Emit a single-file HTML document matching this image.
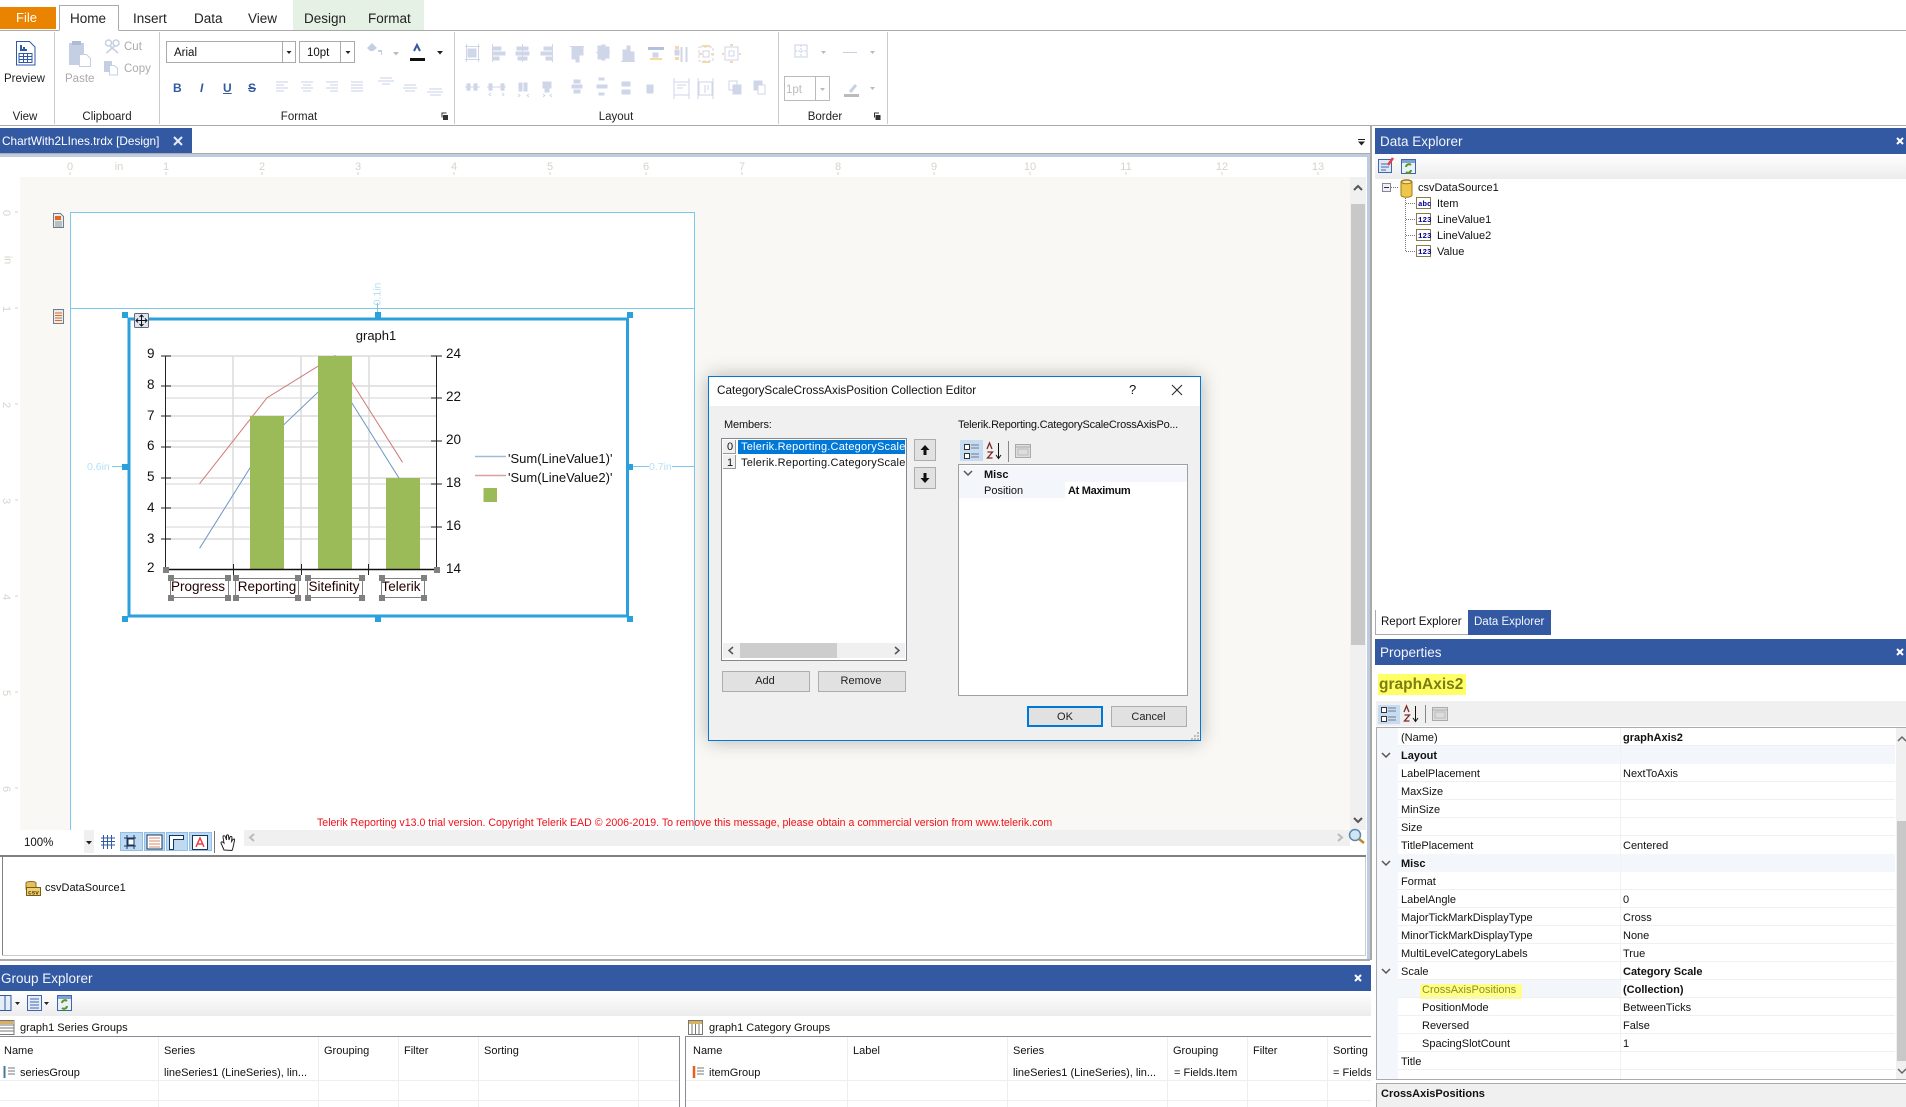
<!DOCTYPE html>
<html><head><meta charset="utf-8"><title>Telerik Report Designer</title>
<style>
html,body{margin:0;padding:0;background:#fff}
#p{position:relative;width:1906px;height:1107px;overflow:hidden;background:#fff;font:11px "Liberation Sans",sans-serif;color:#111}
#p div{position:absolute}
.t{position:absolute;white-space:nowrap;line-height:14px;margin-top:1px}
.t.n{margin-top:0}
.c{transform:translateX(-50%)}
.tab{font-size:13.5px;color:#222}
.g{font-size:11.5px;color:#222}
.h{background:#3359A3;color:#f2f5fa;font-size:13.5px}
.r{color:#d8d3cb;font-size:11px}
.b{font-weight:bold}
.gr{color:#111}
.btn{background:#e1e1e1;border:1px solid #adadad;box-sizing:border-box;text-align:center;line-height:19px;color:#222}
</style></head><body><div id="p">

<!-- ribbon -->
<div style="left:0;top:7px;width:56px;height:22px;background:#E98300"></div>
<div style="left:293px;top:0;width:131px;height:31px;background:#E6F1E6"></div>
<div style="left:0;top:30px;width:1906px;height:1px;background:#aaa"></div>
<div style="left:59px;top:5px;width:60px;height:26px;box-sizing:border-box;border:1px solid #aaa;border-bottom:1px solid #fff;background:#fff"></div>
<span class="t tab" style="left:16px;top:10px;color:#fff;font-size:13px">File</span>
<span class="t tab n" style="left:70px;top:12px">Home</span>
<span class="t tab n" style="left:133px;top:12px">Insert</span>
<span class="t tab n" style="left:194px;top:12px">Data</span>
<span class="t tab n" style="left:248px;top:12px">View</span>
<span class="t tab n" style="left:304px;top:12px">Design</span>
<span class="t tab n" style="left:368px;top:12px">Format</span>
<div style="left:54px;top:32px;width:1px;height:92px;background:#ccc"></div>
<div style="left:159px;top:32px;width:1px;height:92px;background:#ccc"></div>
<div style="left:454px;top:32px;width:1px;height:92px;background:#ccc"></div>
<div style="left:778px;top:32px;width:1px;height:92px;background:#ccc"></div>
<div style="left:887px;top:32px;width:1px;height:92px;background:#ccc"></div>
<div style="left:0;top:125px;width:1906px;height:1px;background:#aaa"></div>
<span class="t g" style="left:4px;top:71px">Preview</span>
<span class="t g" style="left:65px;top:71px;color:#aaa">Paste</span>
<span class="t g" style="left:124px;top:39px;color:#aaa">Cut</span>
<span class="t g" style="left:124px;top:61px;color:#aaa">Copy</span>
<span class="t g c" style="left:25px;top:109px">View</span>
<span class="t g c" style="left:107px;top:109px">Clipboard</span>
<span class="t g c" style="left:299px;top:109px">Format</span>
<span class="t g c" style="left:616px;top:109px">Layout</span>
<span class="t g c" style="left:825px;top:109px">Border</span>
<div style="left:166px;top:41px;width:130px;height:22px;box-sizing:border-box;border:1px solid #aaa"></div>
<div style="left:282px;top:41px;width:1px;height:22px;background:#aaa"></div>
<span class="t" style="left:174px;top:45px;font-size:11.5px">Arial</span>
<div style="left:299px;top:41px;width:56px;height:22px;box-sizing:border-box;border:1px solid #aaa"></div>
<div style="left:340px;top:41px;width:1px;height:22px;background:#aaa"></div>
<span class="t" style="left:307px;top:45px;font-size:11.5px">10pt</span>
<span class="t b" style="left:173px;top:80px;color:#3359A3;font-size:12px">B</span>
<span class="t" style="left:200px;top:80px;color:#3359A3;font-size:12px;font-style:italic;font-weight:bold">I</span>
<span class="t" style="left:223px;top:80px;color:#3359A3;font-size:12px;text-decoration:underline;font-weight:bold">U</span>
<span class="t" style="left:248px;top:80px;color:#3359A3;font-size:12px;text-decoration:line-through;font-weight:bold">S</span>
<div style="left:784px;top:76px;width:46px;height:25px;box-sizing:border-box;border:1px solid #bbb"></div>
<div style="left:815px;top:76px;width:1px;height:25px;background:#bbb"></div>
<span class="t" style="left:786px;top:82px;font-size:11.5px;color:#bbb">1pt</span>

<!-- document tab -->
<div style="left:0;top:128px;width:192px;height:25px;background:#3359A3"></div>
<span class="t" style="left:2px;top:133px;color:#fff;font-size:11.8px">ChartWith2LInes.trdx [Design]</span>
<div style="left:0;top:153px;width:1370px;height:1px;background:#aaa"></div>
<div style="left:0;top:154px;width:1370px;height:3px;background:#BFCBE0"></div>
<div style="left:1367px;top:154px;width:3px;height:806px;background:#BFCBE0"></div>
<div style="left:1370px;top:126px;width:2px;height:834px;background:#a8a8a8"></div>

<!-- ruler -->
<span class="t r c" style="left:70px;top:159px">0</span>
<span class="t r c" style="left:119px;top:159px">in</span>
<span class="t r c" style="left:166px;top:159px">1</span>
<span class="t r c" style="left:262px;top:159px">2</span>
<span class="t r c" style="left:358px;top:159px">3</span>
<span class="t r c" style="left:454px;top:159px">4</span>
<span class="t r c" style="left:550px;top:159px">5</span>
<span class="t r c" style="left:646px;top:159px">6</span>
<span class="t r c" style="left:742px;top:159px">7</span>
<span class="t r c" style="left:838px;top:159px">8</span>
<span class="t r c" style="left:934px;top:159px">9</span>
<span class="t r c" style="left:1030px;top:159px">10</span>
<span class="t r c" style="left:1126px;top:159px">11</span>
<span class="t r c" style="left:1222px;top:159px">12</span>
<span class="t r c" style="left:1318px;top:159px">13</span>
<span class="t r" style="left:3px;top:205px;transform:rotate(90deg)">0</span>
<span class="t r" style="left:3px;top:252px;transform:rotate(90deg)">in</span>
<span class="t r" style="left:3px;top:301px;transform:rotate(90deg)">1</span>
<span class="t r" style="left:3px;top:397px;transform:rotate(90deg)">2</span>
<span class="t r" style="left:3px;top:493px;transform:rotate(90deg)">3</span>
<span class="t r" style="left:3px;top:589px;transform:rotate(90deg)">4</span>
<span class="t r" style="left:3px;top:685px;transform:rotate(90deg)">5</span>
<span class="t r" style="left:3px;top:781px;transform:rotate(90deg)">6</span>

<!-- canvas -->
<div style="left:20px;top:177px;width:1330px;height:653px;background:#F9F8F4"></div>
<div style="left:70px;top:212px;width:625px;height:618px;box-sizing:border-box;background:#fff;border:1px solid #7CC8EA;border-bottom:0"></div>
<div style="left:70px;top:308px;width:625px;height:1px;background:#7CC8EA"></div>
<span class="t" style="left:317px;top:815px;color:#f0101a;font-size:10.6px">Telerik Reporting v13.0 trial version. Copyright Telerik EAD © 2006-2019. To remove this message, please obtain a commercial version from www.telerik.com</span>
<div style="left:1350px;top:177px;width:16px;height:653px;background:#f0f0f0"></div>
<div style="left:1351px;top:204px;width:14px;height:441px;background:#c8c8c8"></div>

<!-- bottom toolbar -->
<div style="left:0;top:830px;width:1366px;height:23px;background:#fff"></div>
<div style="left:84px;top:830px;width:10px;height:23px;background:#f0f0f0"></div>
<div style="left:244px;top:830px;width:1106px;height:16px;background:#f0f0f0"></div>
<span class="t" style="left:24px;top:835px;font-size:11.5px">100%</span>
<div style="left:120px;top:832px;width:92px;height:19px;background:#BFD9F1"></div>
<div style="left:0;top:855px;width:1366px;height:2px;background:#808080"></div>
<div style="left:2px;top:857px;width:1px;height:98px;background:#808080"></div>
<div style="left:1365px;top:857px;width:1px;height:98px;background:#ccc"></div>
<div style="left:2px;top:955px;width:1364px;height:1px;background:#ccc"></div>
<span class="t" style="left:45px;top:880px">csvDataSource1</span>
<div style="left:0;top:959px;width:1370px;height:2px;background:#aaa"></div>

<!-- group explorer -->
<div class="h" style="left:0;top:965px;width:1371px;height:26px"></div>
<span class="t" style="left:1px;top:971px;color:#f2f5fa;font-size:13.5px">Group Explorer</span>
<div style="left:0;top:991px;width:1371px;height:25px;background:linear-gradient(#fff,#ececec)"></div>
<span class="t" style="left:20px;top:1020px">graph1 Series Groups</span>
<span class="t" style="left:709px;top:1020px">graph1 Category Groups</span>
<div style="left:-2px;top:1036px;width:682px;height:80px;box-sizing:border-box;border:1px solid #8b8b96"></div>
<div style="left:685px;top:1036px;width:686px;height:80px;box-sizing:border-box;border:1px solid #8b8b96;border-right:0"></div>
<div style="left:0;top:1080px;width:679px;height:1px;background:#eee"></div>
<div style="left:0;top:1100px;width:679px;height:1px;background:#eee"></div>
<div style="left:686px;top:1080px;width:685px;height:1px;background:#eee"></div>
<div style="left:686px;top:1100px;width:685px;height:1px;background:#eee"></div>
<div style="left:158px;top:1037px;width:1px;height:70px;background:#eee"></div>
<div style="left:318px;top:1037px;width:1px;height:70px;background:#eee"></div>
<div style="left:398px;top:1037px;width:1px;height:70px;background:#eee"></div>
<div style="left:478px;top:1037px;width:1px;height:70px;background:#eee"></div>
<div style="left:638px;top:1037px;width:1px;height:70px;background:#eee"></div>
<div style="left:847px;top:1037px;width:1px;height:70px;background:#eee"></div>
<div style="left:1007px;top:1037px;width:1px;height:70px;background:#eee"></div>
<div style="left:1167px;top:1037px;width:1px;height:70px;background:#eee"></div>
<div style="left:1247px;top:1037px;width:1px;height:70px;background:#eee"></div>
<div style="left:1327px;top:1037px;width:1px;height:70px;background:#eee"></div>
<span class="t" style="left:4px;top:1043px">Name</span>
<span class="t" style="left:164px;top:1043px">Series</span>
<span class="t" style="left:324px;top:1043px">Grouping</span>
<span class="t" style="left:404px;top:1043px">Filter</span>
<span class="t" style="left:484px;top:1043px">Sorting</span>
<span class="t" style="left:20px;top:1065px">seriesGroup</span>
<span class="t" style="left:164px;top:1065px">lineSeries1 (LineSeries), lin...</span>
<span class="t" style="left:693px;top:1043px">Name</span>
<span class="t" style="left:853px;top:1043px">Label</span>
<span class="t" style="left:1013px;top:1043px">Series</span>
<span class="t" style="left:1173px;top:1043px">Grouping</span>
<span class="t" style="left:1253px;top:1043px">Filter</span>
<span class="t" style="left:1333px;top:1043px;width:38px;overflow:hidden">Sorting</span>
<span class="t" style="left:709px;top:1065px">itemGroup</span>
<span class="t" style="left:1013px;top:1065px">lineSeries1 (LineSeries), lin...</span>
<span class="t" style="left:1174px;top:1065px">= Fields.Item</span>
<span class="t" style="left:1333px;top:1065px;width:38px;overflow:hidden">= Fields.Item</span>

<!-- data explorer -->
<div class="h" style="left:1375px;top:128px;width:531px;height:26px"></div>
<span class="t" style="left:1380px;top:134px;color:#f2f5fa;font-size:13.5px">Data Explorer</span>
<div style="left:1375px;top:154px;width:531px;height:25px;background:linear-gradient(#fff,#ececec)"></div>
<span class="t" style="left:1418px;top:180px">csvDataSource1</span>
<span class="t" style="left:1437px;top:196px">Item</span>
<span class="t" style="left:1437px;top:212px">LineValue1</span>
<span class="t" style="left:1437px;top:228px">LineValue2</span>
<span class="t" style="left:1437px;top:244px">Value</span>
<div style="left:1375px;top:610px;width:93px;height:25px;box-sizing:border-box;border-left:1px solid #aaa;border-bottom:1px solid #aaa"></div>
<div style="left:1468px;top:610px;width:83px;height:25px;background:#3359A3"></div>
<span class="t" style="left:1381px;top:614px;font-size:11.5px">Report Explorer</span>
<span class="t" style="left:1474px;top:614px;color:#f2f5fa;font-size:11.5px">Data Explorer</span>

<!-- properties -->
<div class="h" style="left:1375px;top:639px;width:531px;height:26px"></div>
<span class="t" style="left:1380px;top:645px;color:#f2f5fa;font-size:13.5px">Properties</span>
<div style="left:1378px;top:674px;width:88px;height:21px;background:#FFFF66"></div>
<span class="t b" style="left:1379px;top:677px;font-size:15.5px;color:#7d7d12">graphAxis2</span>
<div style="left:1376px;top:701px;width:530px;height:25px;background:#f0f0f0"></div>
<div style="left:1378px;top:705px;width:22px;height:19px;background:#C5DCF3"></div>
<div style="left:1376px;top:727px;width:530px;height:1px;background:#aaa"></div>
<div style="left:1376px;top:728px;width:1px;height:351px;background:#aaa"></div>
<div style="left:1376px;top:1079px;width:530px;height:1px;background:#aaa"></div>
<div style="left:1377px;top:728px;width:21px;height:351px;background:#F3F6FB"></div>
<div style="left:1398px;top:746px;width:497px;height:18px;background:#F3F6FB"></div>
<div style="left:1377px;top:854px;width:518px;height:18px;background:#F3F6FB"></div>
<div style="left:1398px;top:980px;width:222px;height:18px;background:#F3F6FB"></div>
<div style="left:1420px;top:984px;width:102px;height:15px;background:#FFFF88"></div>
<div style="left:1620px;top:728px;width:1px;height:351px;background:#f2f2f2"></div>
<div style="left:1398px;top:745px;width:497px;height:1px;background:#f0f0f0"></div>
<div style="left:1398px;top:781px;width:497px;height:1px;background:#f0f0f0"></div>
<div style="left:1398px;top:799px;width:497px;height:1px;background:#f0f0f0"></div>
<div style="left:1398px;top:817px;width:497px;height:1px;background:#f0f0f0"></div>
<div style="left:1398px;top:835px;width:497px;height:1px;background:#f0f0f0"></div>
<div style="left:1398px;top:889px;width:497px;height:1px;background:#f0f0f0"></div>
<div style="left:1398px;top:907px;width:497px;height:1px;background:#f0f0f0"></div>
<div style="left:1398px;top:925px;width:497px;height:1px;background:#f0f0f0"></div>
<div style="left:1398px;top:943px;width:497px;height:1px;background:#f0f0f0"></div>
<div style="left:1398px;top:961px;width:497px;height:1px;background:#f0f0f0"></div>
<div style="left:1398px;top:979px;width:497px;height:1px;background:#f0f0f0"></div>
<div style="left:1398px;top:997px;width:497px;height:1px;background:#f0f0f0"></div>
<div style="left:1398px;top:1015px;width:497px;height:1px;background:#f0f0f0"></div>
<div style="left:1398px;top:1033px;width:497px;height:1px;background:#f0f0f0"></div>
<div style="left:1398px;top:1051px;width:497px;height:1px;background:#f0f0f0"></div>
<div style="left:1398px;top:1069px;width:497px;height:1px;background:#f0f0f0"></div>
<div style="left:1896px;top:728px;width:10px;height:351px;background:#f0f0f0"></div>
<div style="left:1897px;top:821px;width:9px;height:240px;background:#c8c8c8"></div>
<span class="t" style="left:1401px;top:730px">(Name)</span><span class="t b" style="left:1623px;top:730px">graphAxis2</span>
<span class="t b" style="left:1401px;top:748px">Layout</span>
<span class="t" style="left:1401px;top:766px">LabelPlacement</span><span class="t" style="left:1623px;top:766px">NextToAxis</span>
<span class="t" style="left:1401px;top:784px">MaxSize</span>
<span class="t" style="left:1401px;top:802px">MinSize</span>
<span class="t" style="left:1401px;top:820px">Size</span>
<span class="t" style="left:1401px;top:838px">TitlePlacement</span><span class="t" style="left:1623px;top:838px">Centered</span>
<span class="t b" style="left:1401px;top:856px">Misc</span>
<span class="t" style="left:1401px;top:874px">Format</span>
<span class="t" style="left:1401px;top:892px">LabelAngle</span><span class="t" style="left:1623px;top:892px">0</span>
<span class="t" style="left:1401px;top:910px">MajorTickMarkDisplayType</span><span class="t" style="left:1623px;top:910px">Cross</span>
<span class="t" style="left:1401px;top:928px">MinorTickMarkDisplayType</span><span class="t" style="left:1623px;top:928px">None</span>
<span class="t" style="left:1401px;top:946px">MultiLevelCategoryLabels</span><span class="t" style="left:1623px;top:946px">True</span>
<span class="t" style="left:1401px;top:964px">Scale</span><span class="t b" style="left:1623px;top:964px">Category Scale</span>
<span class="t" style="left:1422px;top:982px;color:#8f8f1c">CrossAxisPositions</span><span class="t b" style="left:1623px;top:982px">(Collection)</span>
<span class="t" style="left:1422px;top:1000px">PositionMode</span><span class="t" style="left:1623px;top:1000px">BetweenTicks</span>
<span class="t" style="left:1422px;top:1018px">Reversed</span><span class="t" style="left:1623px;top:1018px">False</span>
<span class="t" style="left:1422px;top:1036px">SpacingSlotCount</span><span class="t" style="left:1623px;top:1036px">1</span>
<span class="t" style="left:1401px;top:1054px">Title</span>
<div style="left:1376px;top:1083px;width:530px;height:24px;box-sizing:border-box;background:#f0f0f0;border-top:1px solid #aaa;border-left:1px solid #aaa"></div>
<span class="t b" style="left:1381px;top:1086px">CrossAxisPositions</span>

<!-- chart labels -->
<span class="t c n" style="left:376px;top:329px;font-size:13px">graph1</span>
<span class="t n" style="left:147px;top:347px;font-size:13.5px">9</span>
<span class="t n" style="left:147px;top:378px;font-size:13.5px">8</span>
<span class="t n" style="left:147px;top:409px;font-size:13.5px">7</span>
<span class="t n" style="left:147px;top:439px;font-size:13.5px">6</span>
<span class="t n" style="left:147px;top:470px;font-size:13.5px">5</span>
<span class="t n" style="left:147px;top:501px;font-size:13.5px">4</span>
<span class="t n" style="left:147px;top:532px;font-size:13.5px">3</span>
<span class="t n" style="left:147px;top:561px;font-size:13.5px">2</span>
<span class="t n" style="left:446px;top:347px;font-size:13.5px">24</span>
<span class="t n" style="left:446px;top:390px;font-size:13.5px">22</span>
<span class="t n" style="left:446px;top:433px;font-size:13.5px">20</span>
<span class="t n" style="left:446px;top:476px;font-size:13.5px">18</span>
<span class="t n" style="left:446px;top:519px;font-size:13.5px">16</span>
<span class="t n" style="left:446px;top:562px;font-size:13.5px">14</span>
<span class="t" style="left:508px;top:451px;font-size:13px">'Sum(LineValue1)'</span>
<span class="t" style="left:508px;top:470px;font-size:13px">'Sum(LineValue2)'</span>
<span class="t c" style="left:198px;top:579px;font-size:13.5px;color:#200">Progress</span>
<span class="t c" style="left:267px;top:579px;font-size:13.5px;color:#200">Reporting</span>
<span class="t c" style="left:334px;top:579px;font-size:13.5px;color:#200">Sitefinity</span>
<span class="t c" style="left:401px;top:579px;font-size:13.5px;color:#200">Telerik</span>
<span class="t" style="left:366px;top:286px;font-size:10.5px;color:#b5e0f4;transform:rotate(-90deg)">0.1in</span>
<span class="t" style="left:87px;top:459px;font-size:10.5px;color:#b5e0f4">0.6in</span>
<span class="t" style="left:649px;top:459px;font-size:10.5px;color:#b5e0f4">0.7in</span>

<!-- dialog -->
<div style="left:708px;top:376px;width:493px;height:365px;box-sizing:border-box;background:#f0f0f0;border:1px solid #0078D7;box-shadow:0 0 18px rgba(0,0,0,.28)"></div>
<div style="left:709px;top:377px;width:491px;height:29px;background:#fff"></div>
<span class="t n" style="left:717px;top:384px;font-size:11.7px">CategoryScaleCrossAxisPosition Collection Editor</span>
<span class="t n" style="left:1129px;top:383px;font-size:13px">?</span>
<span class="t n" style="left:724px;top:418px;letter-spacing:-.15px">Members:</span>
<span class="t" style="left:958px;top:417px;letter-spacing:-.22px">Telerik.Reporting.CategoryScaleCrossAxisPo...</span>
<div style="left:721px;top:438px;width:186px;height:223px;box-sizing:border-box;background:#fff;border:1px solid #828790"></div>
<div style="left:723px;top:440px;width:13px;height:14px;background:#f0f0f0;border-right:1px solid #999;border-bottom:1px solid #999;box-sizing:border-box"></div>
<div style="left:723px;top:455px;width:13px;height:14px;background:#f0f0f0;border-right:1px solid #999;border-bottom:1px solid #999;box-sizing:border-box"></div>
<span class="t n" style="left:727px;top:440px">0</span>
<span class="t" style="left:727px;top:455px">1</span>
<div style="left:738px;top:440px;width:167px;height:14px;background:#0078D7"></div>
<div style="left:741px;top:440px;width:164px;height:14px;overflow:hidden;color:#fff;line-height:14px;white-space:nowrap;letter-spacing:.22px">Telerik.Reporting.CategoryScaleCrossAxisPosition</div>
<div style="left:741px;top:456px;width:164px;height:14px;overflow:hidden;line-height:14px;white-space:nowrap;letter-spacing:.22px">Telerik.Reporting.CategoryScaleCrossAxisPosition</div>
<div style="left:723px;top:643px;width:182px;height:15px;background:#f0f0f0"></div>
<div style="left:740px;top:643px;width:97px;height:15px;background:#CDCDCD"></div>
<div class="btn" style="left:914px;top:439px;width:22px;height:22px"></div>
<div class="btn" style="left:914px;top:467px;width:22px;height:22px"></div>
<div class="btn" style="left:722px;top:671px;width:88px;height:21px;padding-right:2px">Add</div>
<div class="btn" style="left:818px;top:671px;width:88px;height:21px;padding-right:2px">Remove</div>
<div style="left:960px;top:440px;width:23px;height:21px;background:#C5DCF3"></div>
<div style="left:958px;top:464px;width:230px;height:232px;box-sizing:border-box;background:#fff;border:1px solid #a0a0a0"></div>
<div style="left:959px;top:466px;width:228px;height:16px;background:#F3F6FB"></div>
<div style="left:959px;top:482px;width:106px;height:16px;background:#F3F6FB"></div>
<span class="t b" style="left:984px;top:467px">Misc</span>
<span class="t" style="left:984px;top:483px">Position</span>
<span class="t b" style="left:1068px;top:483px;letter-spacing:-.3px">At Maximum</span>
<div class="btn" style="left:1027px;top:706px;width:76px;height:21px;border:2px solid #0078D7;line-height:18px">OK</div>
<div class="btn" style="left:1111px;top:706px;width:76px;height:21px;line-height:21px;padding-right:1px">Cancel</div>

<!-- graphics overlay -->
<svg style="position:absolute;left:0;top:0" width="1906" height="1107" viewBox="0 0 1906 1107" fill="none">
<!-- Preview icon -->
<path d="M16.5 41.5h13l5.5 5.5v18h-18.5z" fill="#fff" stroke="#2f5aa8"/>
<path d="M20 45v6h7v-2h-2v-2h-2v2h-1v-4z" fill="#2f5aa8"/>
<path d="M19 53.5h13v9h-13zM19 56.5h13M19 59.5h13M23.5 53.5v9M27.5 53.5v9" stroke="#2f5aa8"/>
<!-- Paste -->
<rect x="69" y="43" width="15" height="22" fill="#c5cfe3"/><rect x="72" y="41" width="9" height="4" fill="#aebbd6"/>
<path d="M79.500 54.500h7l4 4v8h-11z" fill="#fff" stroke="#c5cfe3"/>
<!-- Cut/copy -->
<g stroke="#c5cfe3" stroke-width="1.500"><circle cx="108.500" cy="43" r="3"/><circle cx="116" cy="43" r="3"/><path d="M110 46l8 7M114.500 46l-8 7"/></g>
<rect x="104" y="61" width="8" height="11" fill="#c5cfe3"/><path d="M109.500 65.500h5l3 3v6.500h-8z" fill="#fff" stroke="#c5cfe3"/>
<!-- combos arrows -->
<path d="M286.500 51h5l-2.500 3zM345.500 51h5l-2.500 3zM437 51h6l-3 3.500z" fill="#222"/>
<!-- highlight + color -->
<path d="M367 60l5-5 5 5-4 3h-3z" transform="translate(0,-12)" fill="#c5cfe3"/><path d="M378 50h4v5h-1v-3h-3z" fill="#c5cfe3"/>
<path d="M393 52h6l-3 3.500z" fill="#bbb"/>
<path d="M417 50l0 0M414 51l3-6 3 6" stroke="#3359A3" stroke-width="2"/><rect x="410" y="58" width="15" height="3" fill="#111"/>
<!-- align lines -->
<g stroke="#c7d0e4">
<path d="M276 82h12M276 85h8M276 88h12M276 91h8M301 82h12M303 85h8M301 88h12M303 91h8M326 82h12M330 85h8M326 88h12M330 91h8M351 82h12M351 85h12M351 88h12M351 91h12"/>
<path d="M380 78h12M378 81h16M382 84h8M404 85h12M403 88h14M405 91h10M429 89h13M427 92h16M430 95h11"/>
</g>
<!-- layout icons row 1 -->
<g fill="#c7d0e4" stroke="#c7d0e4" opacity=".85">
<rect x="468" y="49" width="8" height="8"/><path d="M465 46.500h15M465 59.500h15M466.500 44v18M478.500 44v18" fill="none"/>
<path d="M492.500 44v18" fill="none"/><rect x="493" y="47" width="8" height="3"/><rect x="493" y="52" width="12" height="3"/><rect x="493" y="57" width="6" height="3"/>
<path d="M522.500 44v18" fill="none"/><rect x="517" y="47" width="11" height="3"/><rect x="516" y="52" width="13" height="3"/><rect x="518" y="57" width="9" height="3"/>
<path d="M552.500 44v18" fill="none"/><rect x="544" y="47" width="8" height="3"/><rect x="541" y="52" width="11" height="3"/><rect x="546" y="57" width="6" height="3"/>
<path d="M570 46.500h14" fill="none"/><rect x="572" y="47" width="3" height="12"/><rect x="576" y="47" width="3" height="15"/><rect x="580" y="47" width="3" height="8"/>
<path d="M596 52.500h14" fill="none"/><rect x="598" y="46" width="3" height="13"/><rect x="602" y="45" width="3" height="15"/><rect x="606" y="47" width="3" height="11"/>
<path d="M621 61.500h14" fill="none"/><rect x="623" y="50" width="3" height="11"/><rect x="627" y="46" width="3" height="15"/><rect x="631" y="52" width="3" height="9"/>
<path d="M648 48.500h16" fill="none" stroke="#a9b7d4" stroke-width="3"/><rect x="653" y="53" width="5" height="4"/>
<rect x="675" y="50" width="4" height="5"/><path d="M686.500 47v15M681.500 47v15" fill="none" stroke-width="2"/>
<rect x="703" y="51" width="6" height="6" fill="none"/><path d="M699 47h14v14h-14z" fill="none" stroke-dasharray="3 2"/>
<path d="M725 47h13v13h-13zM729 51h5v5h-5z" fill="none"/>
</g>
<g fill="#f7d9a8"><rect x="702" y="45" width="8" height="2"/><rect x="702" y="61" width="8" height="2"/><rect x="699" y="53" width="3" height="2"/><rect x="711" y="53" width="3" height="2"/><rect x="730" y="44" width="3" height="2"/><rect x="730" y="61" width="3" height="2"/><rect x="722" y="53" width="2" height="2"/><rect x="739" y="53" width="2" height="2"/><rect x="675" y="46" width="4" height="3"/><rect x="675" y="57" width="4" height="3"/><rect x="650" y="58" width="12" height="2"/></g>
<!-- layout icons row 2 -->
<g fill="#c7d0e4" stroke="#c7d0e4" opacity=".85">
<rect x="467" y="84" width="3" height="6"/><rect x="474" y="84" width="3" height="6"/><path d="M465 87h15M469 83v8M476 83v8" fill="none"/>
<rect x="489" y="84" width="3" height="6"/><rect x="501" y="84" width="3" height="6"/><path d="M487 87h19M490 83v8M503 83v8" fill="none"/><path d="M491 93l-2 1.500 2 1.500M502 93l2 1.500-2 1.500" fill="none"/>
<rect x="519" y="83" width="3" height="8"/><rect x="524" y="83" width="3" height="8"/><path d="M518 94l2 1.500-2 1.500M529 94l-2 1.500 2 1.500" fill="none"/>
<rect x="543" y="82" width="8" height="6"/><rect x="545" y="88" width="4" height="4"/><path d="M543 94l2 1.500-2 1.500M552 94l-2 1.500 2 1.500" fill="none"/>
<rect x="574" y="80" width="6" height="3"/><rect x="574" y="90" width="6" height="3"/><rect x="572" y="85" width="10" height="3"/>
<rect x="599" y="78" width="5" height="2"/><rect x="597" y="85" width="10" height="3"/><rect x="599" y="93" width="5" height="2"/>
<rect x="622" y="82" width="8" height="4"/><rect x="622" y="90" width="8" height="4"/>
<rect x="647" y="85" width="6" height="8"/>
<path d="M674 82h15v13h-15zM677 85h9M677 88h6M674 78v21M689 78v21" fill="none"/>
<path d="M699 82h13v13h-13zM705 85v8M708 85v5M698 78v21M713 78v21" fill="none"/>
<rect x="729" y="81" width="8" height="9" fill="none"/><rect x="733" y="85" width="8" height="9"/>
<rect x="754" y="81" width="8" height="9"/><rect x="758" y="85" width="7" height="9" fill="#fff"/>
</g>
<!-- border group -->
<g stroke="#c7d0e4" fill="none"><rect x="795" y="45" width="12" height="12"/><path d="M801 45v12M795 51h12" stroke-dasharray="2 1"/><path d="M843 52.500h14"/></g>
<path d="M821 51h5l-2.500 3zM870 51h5l-2.500 3zM820 88h5l-2.500 3zM870 87h5l-2.500 3z" fill="#bbb"/>
<path d="M850 92l6-7" stroke="#c7d0e4" stroke-width="3"/><rect x="844" y="94" width="15" height="3" fill="#bbb"/>
<!-- launchers -->
<path d="M441.500 112.500h5v1h-4v4h-1zM443 115h5v5h-5z" fill="#333"/><path d="M874 112.500h5v1h-4v4h-1zM875.500 115h5v5h-5z" fill="#333"/>
<!-- tab close, overflow -->
<path d="M174 137l8 8M182 137l-8 8" stroke="#e8ecf5" stroke-width="2"/>
<path d="M1358 139h7v1h-7zM1358 141.500h7l-3.500 4z" fill="#222"/>
<path d="M1897 138l6 6M1903 138l-6 6M1897 649l6 6M1903 649l-6 6" stroke="#fff" stroke-width="2"/>
<path d="M1355 975l6 6M1361 975l-6 6" stroke="#fff" stroke-width="2"/>
<!-- ruler ticks -->
<path d="M70 172v3M166 172v3M262 172v3M358 172v3M454 172v3M550 172v3M646 172v3M742 172v3M838 172v3M934 172v3M1030 172v3M1126 172v3M1222 172v3M1318 172v3M15 212h3M15 308h3M15 404h3M15 500h3M15 596h3M15 692h3M15 788h3" stroke="#d8d3cb"/>
<!-- section icons -->
<path d="M53.500 213.500h7l3 3v11h-10z" fill="#e8ecef" stroke="#6e7f88"/><rect x="55" y="216" width="6" height="4" fill="#e8651c"/><path d="M55 222h7M55 224h7M55 226h7" stroke="#8a949a"/>
<rect x="53.500" y="309.500" width="10" height="14" fill="#e8ecef" stroke="#6e7f88"/><path d="M55 313h7M55 315.500h7M55 318h7M55 320.500h7" stroke="#e8651c"/>
<!-- scroll arrows -->
<path d="M1354 190l4-4 4 4M1354 818l4 4 4-4" stroke="#555" stroke-width="2"/>
<path d="M254 834l-4 3.500 4 3.500M1338 834l4 3.500-4 3.500" stroke="#bbb" stroke-width="2"/>
<circle cx="1355" cy="835" r="5.500" fill="#cfe6f6" stroke="#5c87a8" stroke-width="1.500"/><path d="M1359 839l5 4" stroke="#b88a2c" stroke-width="2.500"/>
<!-- bottom toolbar icons -->
<path d="M86 841h6l-3 3.500z" fill="#222"/>
<path d="M101 838h14M101 841.500h14M101 845h14M103.500 835v14M107.500 835v14M111.500 835v14" stroke="#2f5aa8"/>
<g stroke="#fff"><path d="M143.500 832v19M165.500 832v19M188.500 832v19"/></g>
<path d="M120.500 832.500h22v18h-22zM144.500 832.500h20v18h-20zM166.500 832.500h21v18h-21zM189.500 832.500h22v18h-22z" stroke="#90c0ea"/>
<path d="M124 838h12M124 846h12M127 835v14M134 835v14" stroke="#16365f"/><rect x="128" y="839" width="6" height="6" fill="#fff" stroke="#16365f"/>
<rect x="147" y="835" width="15" height="14" fill="#fff" stroke="#16365f"/><path d="M149 838h11M149 841h11M149 844h11M149 847h11" stroke="#d98a6a"/>
<path d="M169.500 835.500h14v4h-10v10h-4z" fill="#fff" stroke="#16365f"/>
<rect x="192.500" y="835.500" width="15" height="14" fill="#fff" stroke="#16365f"/><path d="M196 847l4-9 4 9M197.500 844h5" stroke="#e8404a" stroke-width="1.500"/>
<path d="M214.500 831v22" stroke="#777"/>
<path d="M224 850l-3-7c0-2 2-1 3 0l-1-6c0-2 2-1.500 2.500 0l1 3 0-4c0-1.500 2-1.500 2 0l.5 4 1-3c.5-1 2-.5 2 .5l-.5 4 1.500-2c1-1 2-.5 1.500 1l-1.500 7-1 3z" fill="#fff" stroke="#222"/>
<!-- csv icon -->
<path d="M26 883c0-2 10-2 10 0v6H26z" fill="#e6c05a" stroke="#8a6a20"/><rect x="26.500" y="887.500" width="14" height="8" fill="#f0d070" stroke="#7a5c1a"/><text x="28" y="894.500" font-size="6.500" font-weight="bold" fill="#5a4010" font-family="Liberation Sans, sans-serif">csv</text>
<!-- group explorer toolbar icons -->
<rect x="-2" y="995.500" width="13" height="15" fill="#e6edf7" stroke="#2f5aa8"/><path d="M5 996v14" stroke="#2f5aa8"/><path d="M15 1002h5l-2.500 3zM44 1002h5l-2.500 3z" fill="#222"/>
<rect x="27.500" y="995.500" width="14" height="15" fill="#e6edf7" stroke="#3f66ad"/><path d="M30 999h9M30 1002h9M30 1005h9M30 1008h9" stroke="#3f66ad"/>
<rect x="57.500" y="995.500" width="14" height="15" fill="#eaf1fa" stroke="#3f66ad"/><rect x="58" y="996" width="13" height="3" fill="#7fa3d6"/><path d="M62 1003a3 3 0 0 1 5-2M67 1006a3 3 0 0 1-5 2" stroke="#5a9a1a" stroke-width="2"/>
<path d="M-1 1020.500h15v14H-1zM-1 1025h15M-1 1028h15M-1 1031h15" stroke="#777" fill="#fff"/><rect x="0" y="1021" width="13" height="3" fill="#d9b060"/>
<path d="M688.500 1020.500h14v14h-14zM692 1021v14M695.500 1021v14M699 1021v14" stroke="#777" fill="#fff"/><rect x="689" y="1021" width="13" height="3" fill="#d9b060"/>
<path d="M8 1068h7M8 1071h7M8 1074h7" stroke="#777"/><path d="M4.500 1066v12" stroke="#4a7a9a" stroke-width="2"/>
<path d="M694 1066v12" stroke="#e8601c" stroke-width="2.500"/><path d="M697 1068h7M697 1071h7M697 1074h7" stroke="#777"/>
<!-- data explorer toolbar icons -->
<rect x="1378.500" y="159.500" width="13" height="13" fill="#dfe9f6" stroke="#3f66ad"/><path d="M1381 164h8M1381 167h8M1381 170h5" stroke="#3f66ad"/><path d="M1388 165l5-7" stroke="#e8404a" stroke-width="2.500"/>
<rect x="1401.500" y="159.500" width="14" height="14" fill="#eaf1fa" stroke="#3f66ad"/><rect x="1402" y="160" width="13" height="3" fill="#7fa3d6"/><path d="M1406 167a3 3 0 0 1 5-2M1411 170a3 3 0 0 1-5 2" stroke="#5a9a1a" stroke-width="2"/>
<!-- tree -->
<rect x="1382.500" y="183.500" width="8" height="8" fill="#eef" stroke="#888"/><path d="M1384 187.500h5" stroke="#333"/>
<path d="M1391 187.500h8M1405.500 196v56M1406 203.500h10M1406 219.500h10M1406 235.500h10M1406 251.500h10" stroke="#777" stroke-dasharray="1 1"/>
<path d="M1401 182c0-3 11-3 11 0v13c0 3-11 3-11 0z" fill="#efc64a" stroke="#a07a1a"/><ellipse cx="1406.500" cy="182" rx="5" ry="1.800" fill="#f8e6a0" stroke="#a07a1a"/>
<rect x="1416.500" y="197.500" width="14" height="11" fill="#fff" stroke="#8a7a50"/><rect x="1416.500" y="213.500" width="14" height="11" fill="#fff" stroke="#8a7a50"/><rect x="1416.500" y="229.500" width="14" height="11" fill="#fff" stroke="#8a7a50"/><rect x="1416.500" y="245.500" width="14" height="11" fill="#fff" stroke="#8a7a50"/>
<g font-family="Liberation Mono, monospace" font-size="7.500" font-weight="bold" fill="#00008a"><text x="1418" y="206">abc</text><text x="1418" y="222">123</text><text x="1418" y="238">123</text><text x="1418" y="254">123</text></g>
<!-- properties toolbar icons -->
<g transform="translate(0,-2)">
<g stroke="#333"><rect x="1381.500" y="709.500" width="5" height="5" fill="#fff"/><rect x="1381.500" y="718.500" width="5" height="5" fill="#fff"/><path d="M1388 710h8M1388 713h8M1388 719h8M1388 722h8" stroke="#778"/></g>
<path d="M1415.500 708v15M1413 720l2.500 3.500 2.500-3.500" stroke="#111"/>
<path d="M1404 714l2.500-6 2.500 6M1404.500 717h5l-5 6h5" stroke-width="1.300" stroke="#7a2a2a"/>
<path d="M1425.500 707v18" stroke="#888"/>
<rect x="1432.500" y="709.500" width="15" height="13" fill="#ddd" stroke="#aaa"/><path d="M1433 712h14" stroke="#aaa"/><rect x="1435" y="714" width="10" height="6" stroke="#bbb"/>
</g>
<!-- property chevrons -->
<path d="M1382 753l4 4 4-4M1382 861l4 4 4-4M1382 969l4 4 4-4" stroke="#555" stroke-width="1.500"/>
<path d="M1898 741l4-4 4 4M1898 1069l4 4 4-4" stroke="#666" stroke-width="1.500"/>
<!-- chart -->
<g stroke="#dcdcdc" stroke-width="1.500">
<path d="M166 386h270M166 416h270M166 447h270M166 478h270M166 508h270M166 539h270"/>
<path d="M166 398h270M166 441h270M166 484h270M166 527h270" stroke="#e4e4e4"/>
<path d="M166 356h270M233 356v213M301 356v213M369 356v213"/>
</g>
<polyline points="199.600,548.300 267.100,440.700 335,376 402.500,483.700" stroke="#6f96c8"/>
<polyline points="199.600,483.700 267.100,397.700 335,355.700 402.500,462.300" stroke="#cf7a78"/>
<rect x="250" y="416" width="34" height="153" fill="#9BBB59"/><rect x="318" y="356" width="34" height="213" fill="#9BBB59"/><rect x="386" y="478" width="34" height="91" fill="#9BBB59"/>
<path d="M165.500 356v214M436.500 356v214" stroke="#222"/><path d="M165 569.500h272" stroke="#111" stroke-width="1.500"/>
<path d="M161 356h10M161 386h10M161 416h10M161 447h10M161 478h10M161 508h10M161 539h10M431 356h11M431 398h11M431 441h11M431 484h11M431 527h11M233.500 564v11M301.500 564v11M368.500 564v11" stroke="#222"/>
<rect x="129" y="319" width="498.500" height="297" stroke="#2AA0DC" stroke-width="3"/>
<g fill="#2AA0DC"><rect x="122" y="312" width="6" height="6"/><rect x="375" y="312" width="6" height="6"/><rect x="627" y="312" width="6" height="6"/><rect x="122" y="464" width="6" height="6"/><rect x="627" y="464" width="6" height="6"/><rect x="122" y="616" width="6" height="6"/><rect x="375" y="616" width="6" height="6"/><rect x="627" y="616" width="6" height="6"/></g>
<path d="M377.500 303v9M112 466.500h10M633 466.500h16M672 466.500h23" stroke="#7CC8EA"/>
<rect x="134.500" y="313.500" width="14" height="14" rx="1" fill="#dfe6f3" stroke="#667"/><path d="M141.500 315v11M136 320.500h11M139.500 317l2-2 2 2M139.500 324l2 2 2-2M138 318.500l-2 2 2 2M145 318.500l2 2-2 2" stroke="#111"/>
<path d="M475 456.500h31" stroke="#a0badc" stroke-width="1.500"/><path d="M475 475.500h31" stroke="#dda0a0" stroke-width="1.500"/><rect x="483.500" y="488" width="13.500" height="14" fill="#9BBB59"/>
<g stroke="#808080"><rect x="170.500" y="578.500" width="58" height="19"/><rect x="235.500" y="578.500" width="63" height="19"/><rect x="307.500" y="578.500" width="55" height="19"/><rect x="381.500" y="578.500" width="43" height="19"/></g>
<g fill="#808080"><rect x="163" y="567" width="6" height="6"/><rect x="434" y="567" width="6" height="6"/>
<rect x="168" y="575" width="6" height="6"/><rect x="225" y="575" width="6" height="6"/><rect x="168" y="595" width="6" height="6"/><rect x="225" y="595" width="6" height="6"/>
<rect x="233" y="575" width="6" height="6"/><rect x="295" y="575" width="6" height="6"/><rect x="233" y="595" width="6" height="6"/><rect x="295" y="595" width="6" height="6"/>
<rect x="305" y="575" width="6" height="6"/><rect x="359" y="575" width="6" height="6"/><rect x="305" y="595" width="6" height="6"/><rect x="359" y="595" width="6" height="6"/>
<rect x="379" y="575" width="6" height="6"/><rect x="421" y="575" width="6" height="6"/><rect x="379" y="595" width="6" height="6"/><rect x="421" y="595" width="6" height="6"/></g>
<!-- dialog icons -->
<path d="M1172 385l10 10M1182 385l-10 10" stroke="#222"/>
<path d="M925 445l-4.500 5h3v5h3v-5h3z" fill="#111"/><path d="M925 483l-4.500-5h3v-5h3v5h3z" fill="#111"/>
<path d="M733 650l-4 3.500 4 3.500M895 650l4 3.500-4 3.500" transform="translate(0,-3)" stroke="#555" stroke-width="1.500"/>
<g stroke="#333"><rect x="964.500" y="444.500" width="5" height="5" fill="#fff"/><rect x="964.500" y="453.500" width="5" height="5" fill="#fff"/><path d="M971 445h8M971 448h8M971 454h8M971 457h8" stroke="#778"/></g>
<path d="M998.500 443v15M996 455l2.500 3.500 2.500-3.500" stroke="#111"/>
<path d="M987 449l2.500-6 2.500 6M987.500 452h5l-5 6h5" stroke-width="1.300" stroke="#7a2a2a"/>
<path d="M1008.500 441v21" stroke="#888"/>
<rect x="1015.500" y="444.500" width="15" height="13" fill="#ddd" stroke="#aaa"/><path d="M1016 447h14" stroke="#aaa"/><rect x="1018" y="449" width="10" height="6" stroke="#bbb"/>
<path d="M964 471l4 4 4-4" stroke="#555" stroke-width="1.500"/>
<path d="M1197 735h2v2h-2zM1194 738h2v2h-2zM1197 738h2v2h-2zM1191 738h2v2h-2zM1194 735h2v2h-2zM1197 732h2v2h-2z" fill="#bbb"/>
</svg>
</div></body></html>
